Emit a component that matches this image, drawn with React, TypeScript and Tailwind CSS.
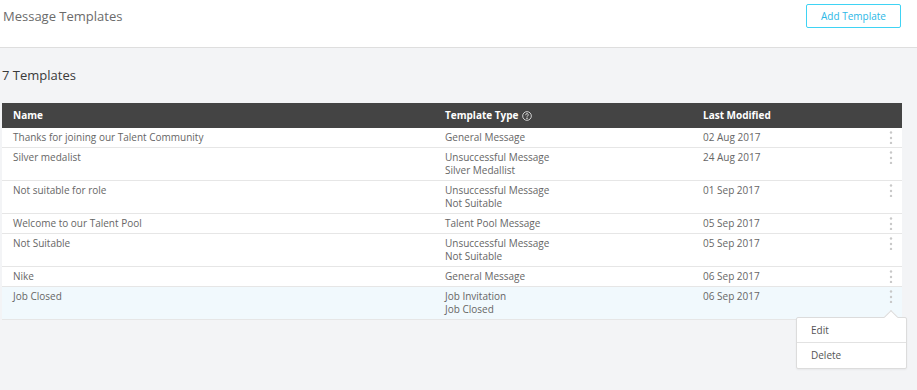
import React from 'react';

type Row = { name: string; type: string; sub?: string; date: string; active?: boolean };

const rows: Row[] = [
  { name: 'Thanks for joining our Talent Community', type: 'General Message', date: '02 Aug 2017' },
  { name: 'Silver medalist', type: 'Unsuccessful Message', sub: 'Silver Medallist', date: '24 Aug 2017' },
  { name: 'Not suitable for role', type: 'Unsuccessful Message', sub: 'Not Suitable', date: '01 Sep 2017' },
  { name: 'Welcome to our Talent Pool', type: 'Talent Pool Message', date: '05 Sep 2017' },
  { name: 'Not Suitable', type: 'Unsuccessful Message', sub: 'Not Suitable', date: '05 Sep 2017' },
  { name: 'Nike', type: 'General Message', date: '06 Sep 2017' },
  { name: 'Job Closed', type: 'Job Invitation', sub: 'Job Closed', date: '06 Sep 2017', active: true },
];

const Dots = () => (
  <svg width="4" height="13" viewBox="0 0 4 13" className="block text-[#c8c8c8]">
    <circle cx="2" cy="1.5" r="1.2" fill="currentColor" />
    <circle cx="2" cy="7" r="1.2" fill="currentColor" />
    <circle cx="2" cy="12" r="1.2" fill="currentColor" />
  </svg>
);

const HelpIcon = () => (
  <svg width="10" height="10" viewBox="0 0 12 12" fill="none" stroke="white" strokeWidth="0.9">
    <circle cx="6" cy="6" r="5.2" />
    <path d="M4.5 4.6a1.5 1.5 0 1 1 2.2 1.3c-.5.3-.7.6-.7 1.1v.3" strokeLinecap="round" />
    <circle cx="6" cy="8.9" r="0.35" fill="white" />
  </svg>
);

const RowMenu = () => (
  <div className="absolute right-[-5px] top-[27px] z-10 w-[111px] bg-white border border-[#dcdcdc] rounded-[2px] shadow-[0_1px_2px_rgba(0,0,0,0.05)]">
    <div className="absolute -top-[6px] right-[10px] w-[10px] h-[10px] bg-white border-l border-t border-[#dcdcdc] rotate-45" />
    <div className="relative h-[25px] pl-[14px] flex items-center text-[10px] text-[#555] border-b border-[#e2e2e2]">Edit</div>
    <div className="h-[25px] pl-[14px] flex items-center text-[10px] text-[#555]">Delete</div>
  </div>
);

const App = () => {
  return (
    <div className="w-[917px] h-[390px] bg-[#f3f4f6] overflow-hidden" style={{ fontFamily: '"Open Sans", "Liberation Sans", sans-serif' }}>
      <div className="h-[48px] bg-white border-b border-[#dedede] flex justify-between items-start">
        <h1 className="pl-[3px] pt-[6px] text-[13px] text-[#6b6b6b] leading-[20px]">Message Templates</h1>
        <button className="mt-[4px] mr-[16px] h-[24px] w-[95px] border border-[#3fd3f4] rounded-[2px] text-[10px] text-[#2cb8e6] bg-white">
          Add Template
        </button>
      </div>

      <div className="pl-[2px] pr-[15px]">
        <h2 className="pt-[17px] pb-[18px] text-[13px] text-[#3a3a3a] leading-[20px]">7 Templates</h2>

        <div className="bg-white">
          <div className="h-[25px] bg-[#444] text-white text-[10px] font-bold flex items-center">
            <div className="w-[443px] pl-[11px]">Name</div>
            <div className="w-[258px] flex items-center gap-[3px]">Template Type <HelpIcon /></div>
            <div className="flex-1">Last Modified</div>
          </div>
          {rows.map((r, i) => (
            <div
              key={i}
              className={`flex items-start pt-[3px] pb-[3px] border-b border-[#e6e6e6] text-[10px] leading-[13px] text-[#666] ${r.active ? 'bg-[#f1f9fd]' : 'bg-white'}`}
            >
              <div className="w-[443px] pl-[11px]">{r.name}</div>
              <div className="w-[258px]">
                <div>{r.type}</div>
                {r.sub && <div>{r.sub}</div>}
              </div>
              <div className="flex-1">{r.date}</div>
              <div className="relative pr-[9px] flex justify-end">
                <Dots />
                {r.active && <RowMenu />}
              </div>
            </div>
          ))}
        </div>
      </div>
    </div>
  );
};

export default App;
